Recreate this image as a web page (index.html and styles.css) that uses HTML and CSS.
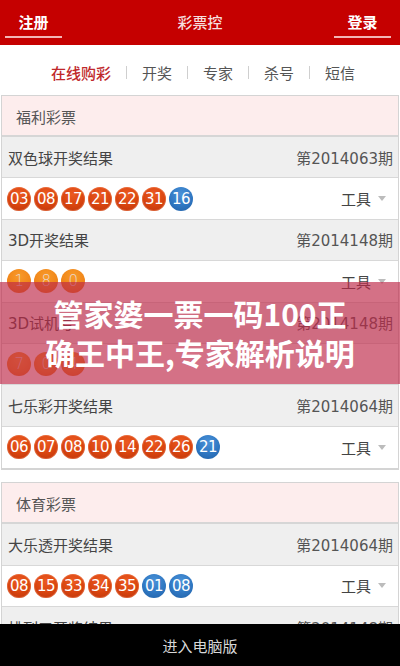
FILE: index.html
```html
<!DOCTYPE html>
<html lang="zh-CN">
<head>
<meta charset="utf-8">
<title>彩票控</title>
<link rel="stylesheet" href="styles.css">
</head>
<body>
<header class="topbar">
  <a class="topbtn left">注册</a>
  <div class="title">彩票控</div>
  <a class="topbtn right">登录</a>
</header>
<nav class="tabs">
  <span class="tab active">在线购彩</span><span class="sep"></span>
  <span class="tab">开奖</span><span class="sep"></span>
  <span class="tab">专家</span><span class="sep"></span>
  <span class="tab">杀号</span><span class="sep"></span>
  <span class="tab">短信</span>
</nav>

<section class="box">
  <div class="box-head">福利彩票</div>
  <div class="row title-row"><span>双色球开奖结果</span><span class="issue">第2014063期</span></div>
  <div class="row ball-row">
    <div class="balls"><span class="ball red">03</span><span class="ball red">08</span><span class="ball red">17</span><span class="ball red">21</span><span class="ball red">22</span><span class="ball red">31</span><span class="ball blue">16</span></div>
    <span class="tool">工具<i class="caret"></i></span>
  </div>
  <div class="row title-row"><span>3D开奖结果</span><span class="issue">第2014148期</span></div>
  <div class="row ball-row">
    <div class="balls"><span class="ball orange">1</span><span class="ball orange">8</span><span class="ball orange">0</span></div>
    <span class="tool">工具<i class="caret"></i></span>
  </div>
  <div class="row title-row"><span>3D试机号</span><span class="issue">第2014148期</span></div>
  <div class="row ball-row">
    <div class="balls"><span class="ball orange">7</span><span class="ball orange">0</span><span class="ball orange">4</span></div>
  </div>
  <div class="row title-row"><span>七乐彩开奖结果</span><span class="issue">第2014064期</span></div>
  <div class="row ball-row">
    <div class="balls"><span class="ball red">06</span><span class="ball red">07</span><span class="ball red">08</span><span class="ball red">10</span><span class="ball red">14</span><span class="ball red">22</span><span class="ball red">26</span><span class="ball blue">21</span></div>
    <span class="tool">工具<i class="caret"></i></span>
  </div>
</section>

<section class="box">
  <div class="box-head">体育彩票</div>
  <div class="row title-row"><span>大乐透开奖结果</span><span class="issue">第2014064期</span></div>
  <div class="row ball-row">
    <div class="balls"><span class="ball red">08</span><span class="ball red">15</span><span class="ball red">33</span><span class="ball red">34</span><span class="ball red">35</span><span class="ball blue">01</span><span class="ball blue">08</span></div>
    <span class="tool">工具<i class="caret"></i></span>
  </div>
  <div class="row title-row"><span>排列三开奖结果</span><span class="issue">第2014148期</span></div>
</section>

<div class="promo">
  <p>管家婆一票一码100正</p>
  <p>确王中王,专家解析说明</p>
</div>

<footer class="bottombar">进入电脑版</footer>
</body>
</html>
```

FILE: styles.css
```css
* { box-sizing: border-box; }
html, body { margin: 0; padding: 0; }
body {
  width: 400px;
  height: 666px;
  overflow: hidden;
  background: #fff;
  font-family: "Noto Sans CJK SC", "Noto Sans", sans-serif;
  color: #444;
  position: relative;
}

.topbar {
  height: 45px;
  background: #c50000;
  display: flex;
  align-items: flex-start;
  padding: 0 9px 0 5px;
  color: #fff;
}
.topbtn {
  width: 57px;
  margin-top: 8px;
  height: 30px;
  line-height: 28px;
  text-align: center;
  font-size: 15px;
  font-weight: bold;
  border-bottom: 2px solid #f3b5b5;
}
.title {
  flex: 1;
  padding-left: 4px;
  text-align: center;
  font-size: 15px;
  font-weight: 500;
  line-height: 44px;
  color: #f6dede;
}

.tabs {
  height: 50px;
  display: flex;
  justify-content: center;
  align-items: center;
  padding: 4px 0 0 6px;
  font-size: 15px;
  color: #555;
}
.tab.active { color: #c0282b; font-weight: 500; }
.sep {
  width: 1px;
  height: 13px;
  background: #cfcfcf;
  margin: 0 15px;
}

.box {
  margin: 0 1px;
  border: 1px solid #d4d4d4;
  border-bottom-width: 2px;
}
.box + .box { margin-top: 12px; }
.box-head {
  height: 41px;
  line-height: 41px;
  padding-left: 14px;
  background: #fdeded;
  font-size: 15px;
  color: #555;
  border-bottom: 2px solid #d6d6d6;
}
.row {
  height: 41.4px;
  display: flex;
  align-items: center;
  justify-content: space-between;
  border-bottom: 1px solid #d8d8d8;
}
.row:last-child { border-bottom: none; }
.title-row {
  background: #efefef;
  padding: 0 5px 0 6px;
  font-family: "DejaVu Sans", "Noto Sans CJK SC", sans-serif;
  font-size: 15px;
  color: #444;
}
.issue { color: #555; }
.ball-row {
  background: #fff;
  padding: 0 12px 0 5px;
}
.balls { display: flex; gap: 3px; }
.ball {
  width: 24px;
  height: 24px;
  border-radius: 50%;
  display: flex;
  align-items: center;
  justify-content: center;
  font-family: "DejaVu Sans", sans-serif;
  font-size: 15px;
  letter-spacing: -0.6px;
  color: #fff;
}
.ball.red {
  background: radial-gradient(circle at 50% 30%, #ec5a22 0%, #d8440f 55%, #b8320a 100%);
  box-shadow: inset 0 0 0 1px rgba(255,160,120,0.35);
}
.ball.blue {
  background: radial-gradient(circle at 50% 30%, #4a92d8 0%, #2f77c2 55%, #2160a6 100%);
}
.ball.orange {
  background: radial-gradient(circle at 50% 30%, #f89a2a 0%, #f08518 60%, #e06a10 100%);
  color: #ead8cc;
  font-family: "DejaVu Sans", sans-serif;
  font-weight: 300;
}
.tool {
  font-size: 15px;
  color: #444;
  display: flex;
  align-items: center;
}
.caret {
  display: inline-block;
  width: 0;
  height: 0;
  margin-left: 7px;
  border-left: 4px solid transparent;
  border-right: 4px solid transparent;
  border-top: 5px solid #bcbcbc;
}

.promo {
  position: absolute;
  left: 0;
  right: 0;
  top: 282px;
  height: 102px;
  background: rgba(190, 40, 72, 0.66);
  display: flex;
  flex-direction: column;
  align-items: center;
  justify-content: center;
}
.promo p {
  margin: 0;
  color: #fff;
  font-size: 30px;
  font-weight: bold;
  line-height: 39px;
  white-space: nowrap;
}

.bottombar {
  position: fixed;
  left: 0;
  right: 0;
  bottom: 0;
  height: 42px;
  background: #000;
  color: #d8d8d8;
  font-size: 15px;
  display: flex;
  align-items: center;
  justify-content: center;
}
```
